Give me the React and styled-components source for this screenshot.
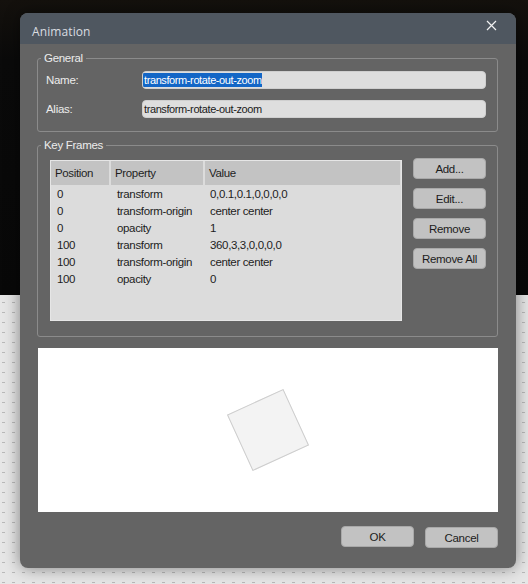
import React from "react";
import styled, { createGlobalStyle } from "styled-components";

const Global = createGlobalStyle`
  html, body { margin: 0; padding: 0; }
  body { font-family: "Liberation Sans", Arial, sans-serif; }
  * { box-sizing: border-box; }
`;

const UI_FONT = `"Liberation Sans", Arial, sans-serif`;

const Desktop = styled.div`
  position: relative;
  width: 528px;
  height: 584px;
  overflow: hidden;
  background-color: #e6e6e6;
  background-image:
    linear-gradient(to bottom, #14110d 0, #0a0a0a 60px, #080808 295px),
    linear-gradient(to bottom, #e6e6e6 0 9px, transparent 9px),
    linear-gradient(90deg, #b9b9b9 0 3px, #e6e6e6 3px);
  background-size: 100% 295px, 10px 10px, 10px 10px;
  background-repeat: no-repeat, repeat, repeat;
  background-position: 0 0, 0 3px, 2px 3px;
`;

const Window = styled.div`
  position: absolute;
  left: 20px;
  top: 13px;
  width: 496px;
  height: 555px;
  border-radius: 8px;
  background: #646464;
  box-shadow: 0 0 16px rgba(0, 0, 0, 0.45);
  display: flex;
  flex-direction: column;
  overflow: hidden;
`;

const TitleBar = styled.div`
  height: 31px;
  flex: none;
  background: #4f5760;
  display: flex;
  justify-content: space-between;
  align-items: flex-start;
  padding: 11px 0 0 12px;
`;

const Title = styled.span`
  font-family: "Open Sans", "Noto Sans", sans-serif;
  font-size: 12px;
  line-height: 16px;
  color: #dadde0;
  letter-spacing: 0.1px;
`;

const CloseButton = styled.button`
  border: 0;
  padding: 0;
  margin: -5px 19px 0 0;
  width: 12px;
  height: 12px;
  background: transparent;
  display: flex;
  align-items: center;
  justify-content: center;
  cursor: pointer;
`;

const Body = styled.div`
  flex: 1;
  display: flex;
  flex-direction: column;
  padding: 7px 18px 19px 17px;
`;

const Group = styled.fieldset`
  margin: ${(p) => p.$top || 0}px 0 0 0;
  border: 1px solid #8b8b8b;
  border-radius: 3px;
  padding: ${(p) => p.$pt}px 11px ${(p) => p.$pb}px 8px;
  min-width: 0;
`;

const Legend = styled.legend`
  font-family: ${UI_FONT};
  font-size: 11.5px;
  letter-spacing: -0.3px;
  line-height: 14px;
  color: #ececec;
  padding: 0 3px;
  margin-left: -5px;
`;

const FormRow = styled.div`
  display: flex;
  align-items: center;
  height: 18px;
  & + & { margin-top: 11px; }
`;

const Label = styled.label`
  width: 96px;
  flex: none;
  font-family: ${UI_FONT};
  font-size: 11.5px;
  letter-spacing: -0.3px;
  color: #ececec;
`;

const Field = styled.div`
  flex: 1;
  height: 18px;
  background: #dedede;
  border: 1px solid #cfcfcf;
  border-radius: 4px;
  display: flex;
  align-items: center;
  font-family: ${UI_FONT};
  font-size: 11px;
  letter-spacing: -0.4px;
  color: #1b1b1b;
  white-space: nowrap;
  overflow: hidden;
`;

const Selected = styled.span`
  background: #1366c6;
  color: #ffffff;
  line-height: 14px;
  padding: 0 0 0 1px;
`;

const Plain = styled.span`
  padding-left: 1px;
`;

const FramesLayout = styled.div`
  display: flex;
  gap: 11px;
  padding-left: 4px;
`;

const List = styled.div`
  width: 352px;
  height: 161px;
  flex: none;
  background: #dcdcdc;
  border: 1px solid #e6e6e6;
  font-family: ${UI_FONT};
  font-size: 11.5px;
  letter-spacing: -0.35px;
  color: #1c1c1c;
`;

const Cols = `58px 92px 1fr`;

const HeaderRow = styled.div`
  display: grid;
  grid-template-columns: ${Cols};
  column-gap: 2px;
  height: 24px;
  padding-right: 1px;
`;

const HeaderCell = styled.div`
  background: #c3c3c3;
  display: flex;
  align-items: center;
  padding-left: 4px;
  color: #1e1e1e;
`;

const Row = styled.div`
  display: grid;
  grid-template-columns: ${Cols};
  column-gap: 2px;
  height: 17px;
  align-items: center;
  &:first-of-type { margin-top: 3px; }
`;

const Cell = styled.div`
  padding-left: ${(p) => p.$pl || 6}px;
  white-space: nowrap;
`;

const ButtonColumn = styled.div`
  display: flex;
  flex-direction: column;
  gap: 8px;
  margin-top: -2px;
`;

const Button = styled.button`
  width: 73px;
  height: 21px;
  padding: 0;
  background: #c2c2c2;
  border: 1px solid #a9a9a9;
  border-radius: 4px;
  font-family: ${UI_FONT};
  font-size: 11.5px;
  letter-spacing: -0.3px;
  color: #1c1c1c;
  cursor: pointer;
  & + & { margin-top: ${(p) => p.$extra || 0}px; }
`;

const Preview = styled.div`
  margin-top: 11px;
  margin-left: 1px;
  height: 164px;
  flex: none;
  background: #ffffff;
  display: flex;
  align-items: center;
  justify-content: center;
`;

const Square = styled.div`
  width: 62px;
  height: 62px;
  background: #f3f3f3;
  border: 1px solid #cdcdcd;
  transform: rotate(-24.5deg);
`;

const Footer = styled.div`
  margin-top: 14px;
  display: flex;
  justify-content: flex-end;
  gap: 11px;
`;

const rows = [
  ["0", "transform", "0,0.1,0.1,0,0,0,0"],
  ["0", "transform-origin", "center center"],
  ["0", "opacity", "1"],
  ["100", "transform", "360,3,3,0,0,0,0"],
  ["100", "transform-origin", "center center"],
  ["100", "opacity", "0"],
];

export default function App() {
  return (
    <>
      <Global />
      <Desktop>
        <Window>
          <TitleBar>
            <Title>Animation</Title>
            <CloseButton aria-label="Close">
              <svg width="11" height="11" viewBox="0 0 11 11">
                <path d="M1 1 L10 10 M10 1 L1 10" stroke="#f2f2f2" strokeWidth="1.2" fill="none" />
              </svg>
            </CloseButton>
          </TitleBar>
          <Body>
            <Group $pt={6} $pb={13}>
              <Legend>General</Legend>
              <FormRow>
                <Label>Name:</Label>
                <Field>
                  <Selected>transform-rotate-out-zoom</Selected>
                </Field>
              </FormRow>
              <FormRow>
                <Label>Alias:</Label>
                <Field>
                  <Plain>transform-rotate-out-zoom</Plain>
                </Field>
              </FormRow>
            </Group>
            <Group $top={6} $pt={8} $pb={15}>
              <Legend>Key Frames</Legend>
              <FramesLayout>
                <List>
                  <HeaderRow>
                    <HeaderCell>Position</HeaderCell>
                    <HeaderCell>Property</HeaderCell>
                    <HeaderCell>Value</HeaderCell>
                  </HeaderRow>
                  {rows.map((r, i) => (
                    <Row key={i}>
                      <Cell>{r[0]}</Cell>
                      <Cell>{r[1]}</Cell>
                      <Cell $pl={5}>{r[2]}</Cell>
                    </Row>
                  ))}
                </List>
                <ButtonColumn>
                  <Button>Add...</Button>
                  <Button>Edit...</Button>
                  <Button>Remove</Button>
                  <Button $extra={1}>Remove All</Button>
                </ButtonColumn>
              </FramesLayout>
            </Group>
            <Preview>
              <Square />
            </Preview>
            <Footer>
              <Button>OK</Button>
              <Button>Cancel</Button>
            </Footer>
          </Body>
        </Window>
      </Desktop>
    </>
  );
}
